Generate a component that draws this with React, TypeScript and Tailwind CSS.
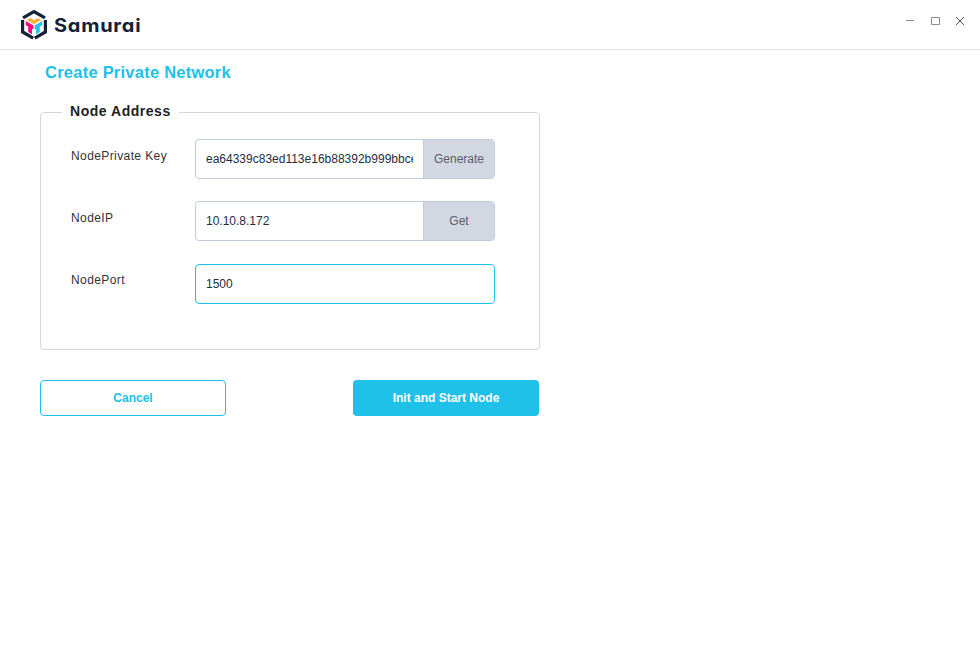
import React from "react";

function Logo() {
  return (
    <svg width="28" height="32" viewBox="0 0 28 32" fill="none">
      <path d="M3 8.9 14 2.7 25 8.9" stroke="#14213b" strokeWidth="3.2" />
      <path d="M2.6 11V23L13.2 29.2" stroke="#14213b" strokeWidth="3.2" />
      <path d="M25.4 11V23L14.8 29.2" stroke="#14213b" strokeWidth="3.2" />
      <path d="M6.9 11 10.2 9 14 11.2 17.8 9 21.1 11 14 15.3z" fill="#fbb034" />
      <path d="M5.8 12 13.4 16.4V20.6L12 19.8V25.2L8.2 23V17.6L5.8 16.2z" fill="#f5087f" />
      <path d="M22.2 12 14.6 16.4V20.6L16 19.8V25.2L19.8 23V17.6L22.2 16.2z" fill="#22c3e9" />
    </svg>
  );
}

function TitleBar() {
  return (
    <header className="flex h-[50px] items-start justify-between border-b border-[#e4e4e4] pl-5">
      <div className="flex h-[41px] items-center pt-[9px]">
        <Logo />
        <span className="ml-[6px] inline-block origin-left scale-x-[1.08] pt-px text-[18.5px] leading-[31px] font-bold tracking-[0.7px] text-[#14213b] [font-family:Inter,sans-serif] [font-feature-settings:'cv11']">
          Samurai
        </span>
      </div>
      <div className="flex pt-4 pr-[15px]">
        <svg width="60" height="10" viewBox="0 0 60 10" fill="none">
          <path d="M1 4.5h8" stroke="#8a8a8a" />
          <path d="M26.5 1.5h8v7h-8z" stroke="#8a8a8a" />
          <path d="M51 1l8 8M59 1l-8 8" stroke="#555" />
        </svg>
      </div>
    </header>
  );
}

function Field({ label, value, action }: { label: string; value: string; action?: string }) {
  return (
    <div className="flex h-10">
      <label className="w-[124px] shrink-0 pt-[9px] text-xs leading-4 tracking-[0.4px] text-[#333]">{label}</label>
      <div
        className={
          "flex h-10 w-[300px] overflow-hidden rounded-[4px] border bg-white " +
          (action ? "border-[#c0ccda]" : "mt-px border-[#20c1e8]")
        }
      >
        <input
          readOnly
          value={value}
          className="min-w-0 flex-1 px-[10px] text-xs text-[#1f2d3d] outline-none"
        />
        {action && (
          <button className="w-[71px] shrink-0 border-l border-[#c0ccda] bg-[#d3d7e1] text-xs text-[#5a5e6b]">
            {action}
          </button>
        )}
      </div>
    </div>
  );
}

export default function App() {
  return (
    <div className="h-[672px] w-[980px] overflow-hidden bg-white [font-family:'Liberation_Sans',Arial,sans-serif]">
      <TitleBar />
      <main className="px-10 pt-[10px]">
        <h1 className="pl-[5px] text-[16.5px] leading-6 font-bold tracking-[0.24px] text-[#20c1e8]">Create Private Network</h1>
        <fieldset className="mt-[18px] h-[248px] w-[500px] rounded-[4px] border border-[#d3d7e3] px-[30px]">
          <legend className="-ml-[9px] px-2 pb-[2px] text-sm leading-[19px] font-bold tracking-[0.53px] text-[#222]">
            Node Address
          </legend>
          <div className="flex flex-col gap-[22px] pt-4">
            <Field label="NodePrivate Key" value="ea64339c83ed113e16b88392b999bbce5d1f" action="Generate" />
            <Field label="NodeIP" value="10.10.8.172" action="Get" />
            <Field label="NodePort" value="1500" />
          </div>
        </fieldset>
        <div className="mt-[30px] flex w-[499px] justify-between text-xs font-bold">
          <button className="h-9 w-[186px] rounded-[4px] border border-[#20c1e8] text-[#20c1e8]">Cancel</button>
          <button className="h-9 w-[186px] rounded-[4px] bg-[#20c1e8] text-white">Init and Start Node</button>
        </div>
      </main>
    </div>
  );
}
